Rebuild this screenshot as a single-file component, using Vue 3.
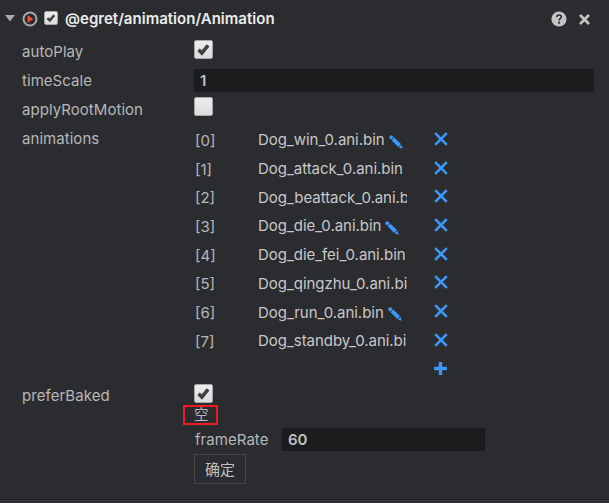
<script setup>
import { ref } from 'vue'

const enabled = ref(true)
const autoPlay = ref(true)
const applyRootMotion = ref(false)
const preferBaked = ref(true)
const timeScale = ref('1')
const frameRate = ref('60')
const clips = ref([
  { name: 'Dog_win_0.ani.bin', editable: true },
  { name: 'Dog_attack_0.ani.bin' },
  { name: 'Dog_beattack_0.ani.bin' },
  { name: 'Dog_die_0.ani.bin', editable: true },
  { name: 'Dog_die_fei_0.ani.bin' },
  { name: 'Dog_qingzhu_0.ani.bin' },
  { name: 'Dog_run_0.ani.bin', editable: true },
  { name: 'Dog_standby_0.ani.bin' },
])
</script>

<template>
  <section class="panel">
    <header class="head">
      <svg class="caret" viewBox="0 0 10 7"><path d="M0 0H10L5 6.5Z" fill="#a9a9aa" /></svg>
      <svg class="play" viewBox="0 0 16 16">
        <circle cx="8" cy="8" r="6.5" fill="none" stroke="#aaa" stroke-width="2" />
        <path d="M5.6 4.3L11.2 8L5.6 11.7Z" fill="#f4542c" />
      </svg>
      <label class="check small">
        <input v-model="enabled" type="checkbox" />
        <svg v-if="enabled" viewBox="0 0 20 20"><path d="M4.2 10.2L8.1 14.1L15.4 5.2" /></svg>
      </label>
      <h1 class="title">@egret/animation/Animation</h1>
      <svg class="help" viewBox="0 0 16 16">
        <circle cx="8" cy="8" r="7.6" fill="#c4c4c4" />
        <path d="M5.7 6.1C5.8 3.2 10.4 3.3 10.3 6C10.2 7.6 8.1 7.5 8.1 9.4" fill="none" stroke="#2b2c30" stroke-width="1.6" />
        <path d="M7.1 10.7H9.1V12.6H7.1Z" fill="#2b2c30" />
      </svg>
      <svg class="close" viewBox="0 0 10 10"><path d="M1.6 1.6L8.4 8.4M8.4 1.6L1.6 8.4" stroke="#c4c4c4" stroke-width="2.4" stroke-linecap="round" /></svg>
    </header>

    <div class="row">
      <span class="name">autoPlay</span>
      <label class="check">
        <input v-model="autoPlay" type="checkbox" />
        <svg v-if="autoPlay" viewBox="0 0 20 20"><path d="M4.2 10.2L8.1 14.1L15.4 5.2" /></svg>
      </label>
    </div>
    <div class="row">
      <span class="name">timeScale</span>
      <input v-model="timeScale" class="field wide" />
    </div>
    <div class="row">
      <span class="name">applyRootMotion</span>
      <label class="check">
        <input v-model="applyRootMotion" type="checkbox" />
        <svg v-if="applyRootMotion" viewBox="0 0 20 20"><path d="M4.2 10.2L8.1 14.1L15.4 5.2" /></svg>
      </label>
    </div>

    <div class="group">
      <span class="name">animations</span>
      <ul class="clips">
        <li v-for="(clip, i) in clips" :key="clip.name" class="clip">
          <span class="index">[{{ i }}]</span>
          <span class="file">
            <span>{{ clip.name }}</span>
            <svg v-if="clip.editable" class="pencil" viewBox="0 0 14 14">
              <path d="M.2 2.8Q.2.4 2.8.3L4.7 2.1L2.1 4.8Z M2.6 5.3L5.2 2.6L12 9.1L9.2 12Z M9.8 12.4L12.4 9.7L13.8 13.8Z" fill="#3d98fb" />
            </svg>
          </span>
          <svg class="remove" viewBox="0 0 14 14" @click="clips.splice(i, 1)">
            <path d="M1.2 1.2L12.8 12.8M12.8 1.2L1.2 12.8" stroke="#3d98fb" stroke-width="2.6" />
          </svg>
        </li>
        <li class="clip">
          <svg class="remove add" viewBox="0 0 13 13"><path d="M6.5 0V13M0 6.5H13" stroke="#3d98fb" stroke-width="3.4" /></svg>
        </li>
      </ul>
    </div>

    <div class="baked">
      <span class="name">preferBaked</span>
      <div class="stack">
        <label class="check">
          <input v-model="preferBaked" type="checkbox" />
          <svg v-if="preferBaked" viewBox="0 0 20 20"><path d="M4.2 10.2L8.1 14.1L15.4 5.2" /></svg>
        </label>
        <div class="empty">空</div>
        <div class="rate">
          <span>frameRate</span>
          <input v-model="frameRate" class="field" />
        </div>
        <button class="confirm">确定</button>
      </div>
    </div>
    <div class="divider"></div>
  </section>
</template>

<style>
body {
  background: #2b2c30;
}
</style>

<style scoped>
.panel {
  box-sizing: border-box;
  width: 609px;
  height: 503px;
  display: flex;
  flex-direction: column;
  overflow: hidden;
  background: #2b2c30;
  color: #b7b7b7;
  font: 15px/20px Inter, "Noto Sans CJK SC", sans-serif;
}
svg {
  display: block;
  flex: none;
}
.head {
  display: flex;
  align-items: center;
  height: 37px;
  padding: 0 19px 0 5px;
  flex: none;
}
.caret {
  width: 10px;
  height: 7px;
}
.play {
  width: 16px;
  height: 16px;
  margin: 0 6px 0 7px;
}
.title {
  flex: 1;
  margin: 0 0 0 7px;
  font-size: 15px;
  font-weight: 600;
  letter-spacing: 0.02px;
  color: #ececec;
  white-space: nowrap;
}
.help {
  width: 16px;
  height: 16px;
  margin-right: 12px;
}
.close {
  width: 11px;
  height: 11px;
  margin-top: 1px;
}
.row {
  display: flex;
  align-items: center;
  height: 28.7px;
  padding-left: 22px;
  flex: none;
}
.name {
  width: 172px;
  flex: none;
  padding-top: 1px;
  letter-spacing: 0.05px;
}
.row .name {
  padding-top: 2px;
}
.check {
  position: relative;
  box-sizing: border-box;
  display: block;
  width: 19px;
  height: 19px;
  margin-top: -4px;
  flex: none;
  border: 1px solid #a6a6a6;
  border-radius: 2px;
  background: linear-gradient(#ededed, #dcdcdc);
}
.check.small {
  width: 14px;
  height: 14px;
  margin-top: -1px;
}
.check input {
  position: absolute;
  inset: 0;
  margin: 0;
  opacity: 0;
}
.check svg {
  width: 100%;
  height: 100%;
}
.check path {
  fill: none;
  stroke: #424242;
  stroke-width: 4.2;
}
.field {
  box-sizing: border-box;
  width: 203px;
  height: 23px;
  padding: 0 6px;
  border: 0;
  border-radius: 1px;
  outline: 0;
  background: #1b1c1e;
  color: #c2c2c2;
  font: 600 15px/20px Inter, sans-serif;
}
.field.wide {
  width: 400px;
}
.group {
  display: flex;
  height: 257px;
  padding: 5px 0 0 22px;
  box-sizing: border-box;
  flex: none;
}
.clips {
  margin: -2px 0 0;
  padding: 0;
  list-style: none;
}
.clip {
  display: flex;
  align-items: center;
  height: 28.7px;
  padding-left: 1px;
}
.index {
  width: 63px;
  padding-top: 1px;
}
.file {
  display: flex;
  align-items: center;
  width: 149px;
  margin-right: 27px;
  overflow: hidden;
  color: #c8c8c8;
  letter-spacing: -0.03px;
  white-space: nowrap;
}
.pencil {
  width: 14px;
  height: 14px;
  margin: 3px 0 0 4px;
}
.remove {
  width: 14px;
  height: 14px;
  margin-top: -3px;
}
.add {
  width: 13px;
  height: 13px;
  margin-left: 239px;
}
.baked {
  display: flex;
  padding: 4px 0 0 22px;
  height: 119px;
  box-sizing: border-box;
  flex: none;
}
.baked .name {
  padding-top: 2px;
}
.baked .check {
  margin-top: 0;
}
.stack {
  display: flex;
  flex-direction: column;
  align-items: flex-start;
}
.empty {
  box-sizing: border-box;
  width: 35px;
  height: 20px;
  margin: 2px 0 3px -11px;
  border: 2px solid #ed1c24;
  padding-left: 9px;
  font-size: 14.5px;
  line-height: 16px;
}
.rate {
  display: flex;
  align-items: center;
  height: 23px;
  padding-left: 1px;
}
.rate span {
  width: 87px;
  letter-spacing: 0.05px;
}
.confirm {
  box-sizing: border-box;
  width: 52px;
  height: 30px;
  margin-top: 3px;
  padding: 0;
  border: 1px solid #47484b;
  background: transparent;
  color: #c0c0c0;
  font: 15px/20px "Noto Sans CJK SC", sans-serif;
}
.divider {
  height: 1px;
  border-top: 1px solid #1c1d1f;
  background: #3b3b40;
  flex: none;
}
</style>
